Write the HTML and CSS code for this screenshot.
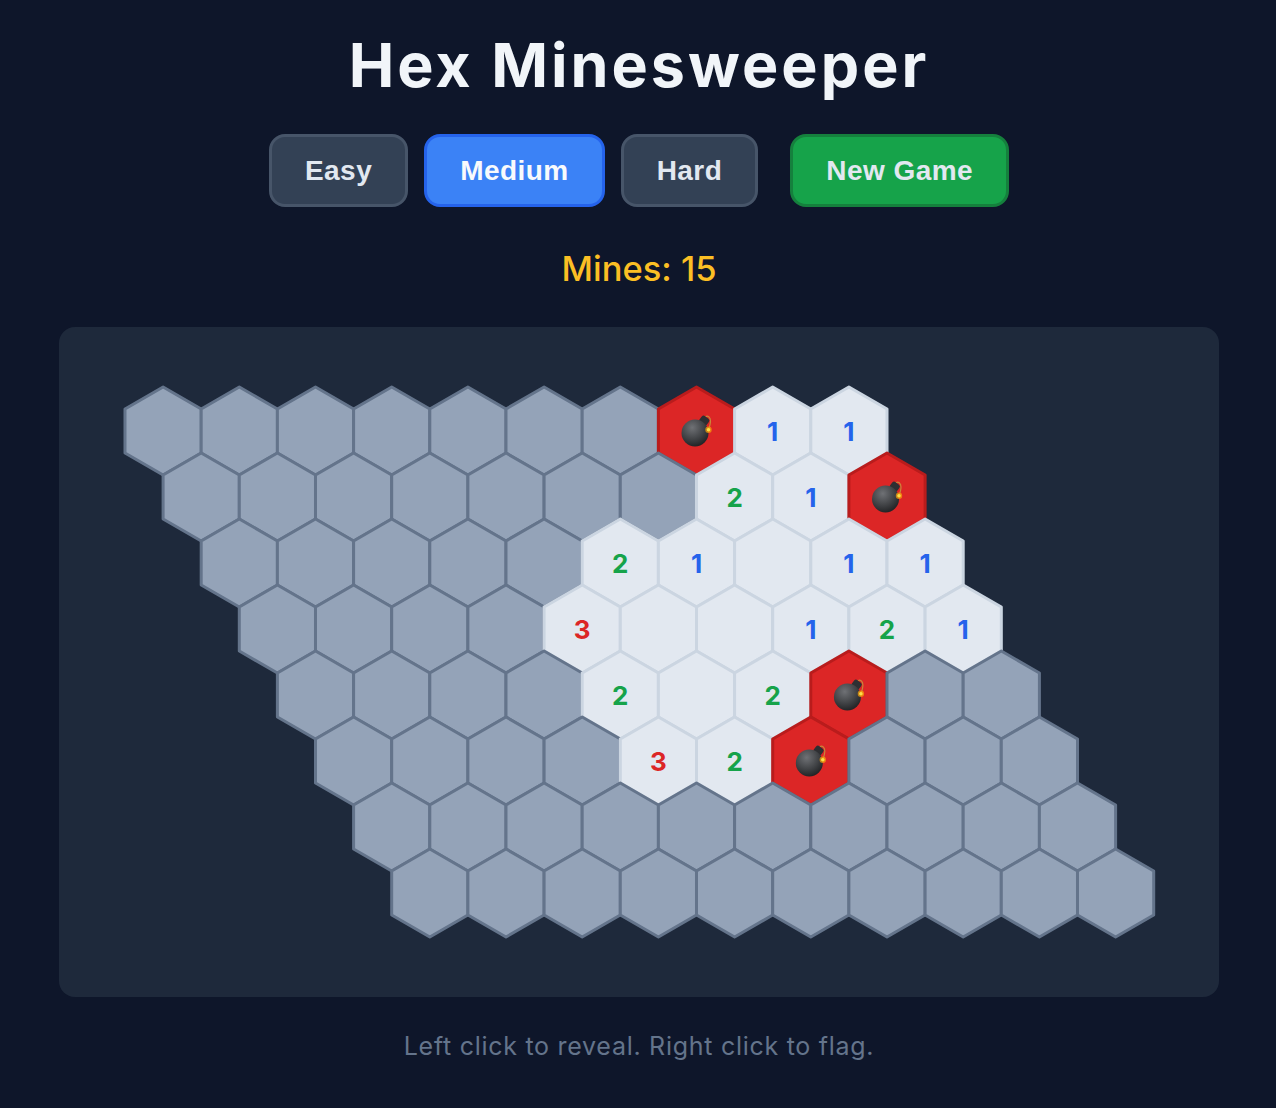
FILE: index.html
```html
<!DOCTYPE html>
<html lang="en">
<head>
    <meta charset="UTF-8">
    <meta name="viewport" content="width=device-width, initial-scale=1.0">
    <title>Hex Minesweeper</title>
    <link rel="stylesheet" href="styles.css">
</head>
<body>
    <div class="game">
        <h1 class="title">Hex Minesweeper</h1>

        <div class="controls">
            <button class="btn">Easy</button>
            <button class="btn active">Medium</button>
            <button class="btn">Hard</button>
            <button class="btn new-game">New Game</button>
        </div>

        <div class="mines">Mines: 15</div>

        <div class="board">
            <svg class="grid" id="grid" viewBox="0 0 1160 670" width="1160" height="670">
                <defs>
                    <radialGradient id="bombBody" cx="40%" cy="30%" r="78%">
                        <stop offset="0%" stop-color="#6f7175"/>
                        <stop offset="55%" stop-color="#414346"/>
                        <stop offset="100%" stop-color="#1b1c1e"/>
                    </radialGradient>
                    <g id="bomb">
                        <path class="fuse" d="M9 -14 C11 -16 14 -14 14 -10 C14 -7 13 -4 12 -1"/>
                        <rect class="neck" x="3" y="-14.5" width="9" height="8.5" rx="2.4" transform="rotate(38 7.5 -10)"/>
                        <circle cx="-1.5" cy="2" r="13.5" fill="url(#bombBody)"/>
                        <circle class="spark-glow" cx="12" cy="-1.2" r="3.2"/>
                        <circle class="spark" cx="12" cy="-1.2" r="1.8"/>
                    </g>
                </defs>
            </svg>
        </div>

        <p class="hint">Left click to reveal. Right click to flag.</p>
    </div>

    <script src="game.js"></script>
</body>
</html>
```

FILE: styles.css
```css
* {
    box-sizing: border-box;
}

body {
    margin: 0;
    height: 1108px;
    overflow: hidden;
    background: #0e162a;
    font-family: Inter, 'Noto Sans', sans-serif;
}

.game {
    width: 1160px;
    margin-left: 59px;
    padding-top: 28px;
    display: flex;
    flex-direction: column;
    align-items: center;
}

.title {
    margin: 0;
    height: 74px;
    line-height: 74px;
    font-size: 61px;
    font-weight: 700;
    letter-spacing: 3px;
    color: #f1f5f9;
}

.controls {
    display: flex;
    gap: 16px;
    margin-top: 32px;
}

.btn {
    height: 73px;
    padding: 0 33px;
    font-family: 'Liberation Sans', Arial, sans-serif;
    font-size: 28px;
    font-weight: 700;
    letter-spacing: 0.45px;
    color: #e2e8f0;
    background: #334155;
    border: 3px solid #475569;
    border-radius: 16px;
}

.btn.active {
    color: #f8fafc;
    background: #3b82f6;
    border-color: #2563eb;
}

.btn.new-game {
    margin-left: 16px;
    background: #16a34a;
    border-color: #15803d;
}

.mines {
    margin-top: 40px;
    height: 44px;
    line-height: 44px;
    font-size: 34.5px;
    font-weight: 500;
    color: #fbbf24;
}

.board {
    width: 1160px;
    height: 670px;
    margin-top: 36px;
    background: #1e293b;
    border-radius: 16px;
}

.grid {
    display: block;
}

.cell {
    stroke-width: 3;
    stroke-linejoin: round;
}

.cell.hidden {
    fill: #94a3b8;
    stroke: #64748b;
}

.cell.open {
    fill: #e2e8f0;
    stroke: #cbd5e1;
}

.cell.mine {
    fill: #dc2626;
    stroke: #b91c1c;
}

.num {
    font-size: 26px;
    font-weight: 700;
    text-anchor: middle;
    dominant-baseline: central;
}

.num.n1 { fill: #2563eb; }
.num.n2 { fill: #16a34a; }
.num.n3 { fill: #dc2626; }

.fuse {
    fill: none;
    stroke: #c9863a;
    stroke-width: 1.2;
}

.neck { fill: #2e2f32; }
.spark-glow { fill: #f59e0b; opacity: 0.75; }
.spark { fill: #fde047; }

.hint {
    margin: 32px 0 0;
    line-height: 34px;
    font-size: 25px;
    letter-spacing: 0.72px;
    color: #64748b;
}
```

FILE: game.js
```js
const SVG_NS = 'http://www.w3.org/2000/svg';
const RADIUS = 44;
const STEP_X = 76.2;
const STEP_Y = 66;

// . hidden, _ revealed blank, * mine, digits are neighbour counts
const board = [
    '.......*11',
    '.......21*',
    '.....21_11',
    '....3__121',
    '....2_2*..',
    '....32*...',
    '..........',
    '..........'
];

const grid = document.getElementById('grid');

function hexPoints(cx, cy) {
    const points = [];
    for (let i = 0; i < 6; i++) {
        const angle = Math.PI / 3 * i + Math.PI / 6;
        points.push((cx + RADIUS * Math.cos(angle)).toFixed(2) + ',' + (cy + RADIUS * Math.sin(angle)).toFixed(2));
    }
    return points.join(' ');
}

function addCell(value, cx, cy) {
    const hex = document.createElementNS(SVG_NS, 'polygon');
    const kind = value === '.' ? 'hidden' : value === '*' ? 'mine' : 'open';
    hex.setAttribute('class', 'cell ' + kind);
    hex.setAttribute('points', hexPoints(cx, cy));
    grid.appendChild(hex);

    if (value === '*') {
        const bomb = document.createElementNS(SVG_NS, 'use');
        bomb.setAttribute('href', '#bomb');
        bomb.setAttribute('x', cx);
        bomb.setAttribute('y', cy);
        grid.appendChild(bomb);
    } else if (value >= '1' && value <= '9') {
        const num = document.createElementNS(SVG_NS, 'text');
        num.setAttribute('class', 'num n' + value);
        num.setAttribute('x', cx);
        num.setAttribute('y', cy);
        num.textContent = value;
        grid.appendChild(num);
    }
}

board.forEach((row, r) => {
    row.split('').forEach((value, c) => {
        addCell(value, 104.1 + c * STEP_X + r * STEP_X / 2, 104 + r * STEP_Y);
    });
});
```
